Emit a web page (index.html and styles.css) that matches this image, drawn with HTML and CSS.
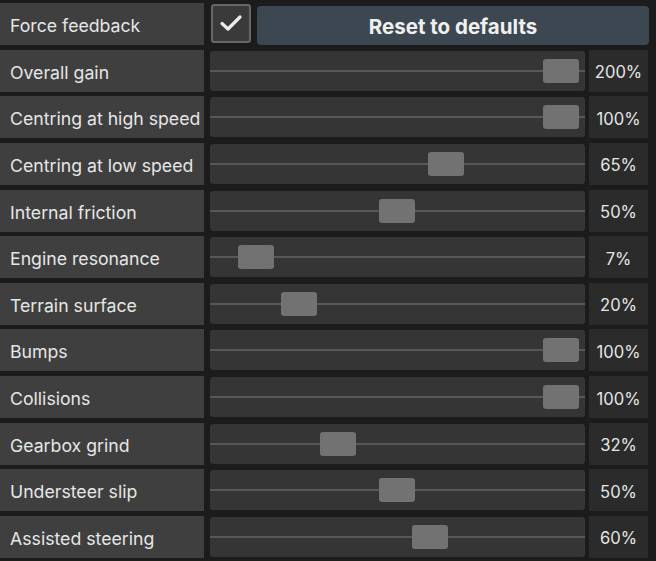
FILE: index.html
```html
<!DOCTYPE html>
<html>
<head>
<meta charset="utf-8">
<link rel="stylesheet" href="styles.css">
</head>
<body>
<div class="panel">
  <div class="row">
    <div class="label">Force feedback</div>
    <div class="top-controls">
      <div class="checkbox">
        <svg width="24" height="20" viewBox="0 0 24 20"><path d="M3 10.5 L9 16 L21 4" fill="none" stroke="#ececec" stroke-width="3.2" stroke-linecap="round" stroke-linejoin="round"/></svg>
      </div>
      <div class="reset">Reset to defaults</div>
    </div>
  </div>
  <div class="row"><div class="label">Overall gain</div><div class="slider"><div class="track"></div><div class="thumb" style="left:333px"></div></div><div class="value">200%</div></div>
  <div class="row"><div class="label">Centring at high speed</div><div class="slider"><div class="track"></div><div class="thumb" style="left:333px"></div></div><div class="value">100%</div></div>
  <div class="row"><div class="label">Centring at low speed</div><div class="slider"><div class="track"></div><div class="thumb" style="left:218px"></div></div><div class="value">65%</div></div>
  <div class="row"><div class="label">Internal friction</div><div class="slider"><div class="track"></div><div class="thumb" style="left:169px"></div></div><div class="value">50%</div></div>
  <div class="row"><div class="label">Engine resonance</div><div class="slider"><div class="track"></div><div class="thumb" style="left:28px"></div></div><div class="value">7%</div></div>
  <div class="row"><div class="label">Terrain surface</div><div class="slider"><div class="track"></div><div class="thumb" style="left:71px"></div></div><div class="value">20%</div></div>
  <div class="row"><div class="label">Bumps</div><div class="slider"><div class="track"></div><div class="thumb" style="left:333px"></div></div><div class="value">100%</div></div>
  <div class="row"><div class="label">Collisions</div><div class="slider"><div class="track"></div><div class="thumb" style="left:333px"></div></div><div class="value">100%</div></div>
  <div class="row"><div class="label">Gearbox grind</div><div class="slider"><div class="track"></div><div class="thumb" style="left:110px"></div></div><div class="value">32%</div></div>
  <div class="row"><div class="label">Understeer slip</div><div class="slider"><div class="track"></div><div class="thumb" style="left:169px"></div></div><div class="value">50%</div></div>
  <div class="row"><div class="label">Assisted steering</div><div class="slider"><div class="track"></div><div class="thumb" style="left:202px"></div></div><div class="value">60%</div></div>
</div>
</body>
</html>
```
FILE: styles.css
```css
html, body {
  margin: 0;
  padding: 0;
  background: #1c1c1c;
  width: 656px;
  height: 561px;
  overflow: hidden;
}
.panel {
  padding-top: 3px;
  display: flex;
  flex-direction: column;
  gap: 4.64px;
  font-family: Inter, "Noto Sans", sans-serif;
  color: #e6e6e6;
}
.row {
  display: flex;
  height: 42px;
  align-items: stretch;
}
.label {
  width: 194px;
  background: #3f3f3f;
  padding-left: 10px;
  padding-top: 3px;
  box-sizing: content-box;
  height: 39px;
  font-size: 17.7px;
  display: flex;
  align-items: center;
  flex-shrink: 0;
  white-space: nowrap;
}
.slider {
  position: relative;
  margin-left: 6px;
  margin-top: 1px;
  margin-bottom: 1px;
  width: 375px;
  background: #353535;
  border-radius: 3px;
}
.track {
  position: absolute;
  left: 0;
  right: 0;
  top: 19px;
  height: 2px;
  background: #575757;
}
.thumb {
  position: absolute;
  top: 8px;
  width: 36px;
  height: 24px;
  background: #727272;
  border-radius: 3px;
}
.value {
  margin-left: 4px;
  width: 59px;
  background: #2b2b2b;
  font-size: 16.6px;
  padding-top: 3px;
  display: flex;
  align-items: center;
  justify-content: center;
}
.top-controls {
  display: flex;
  align-items: center;
  margin-left: 7px;
  gap: 6px;
}
.checkbox {
  width: 36px;
  height: 35px;
  border: 2px solid #666666;
  border-radius: 3px;
  background: #3a3a3a;
  display: flex;
  align-items: center;
  justify-content: center;
  margin-top: -2px;
}
.reset {
  width: 392px;
  height: 39px;
  margin-top: 3px;
  background: #3c4752;
  border-radius: 4px;
  font-weight: 700;
  font-size: 20.5px;
  padding-top: 2px;
  box-sizing: border-box;
  display: flex;
  align-items: center;
  justify-content: center;
  color: #f0f0f0;
}
```
